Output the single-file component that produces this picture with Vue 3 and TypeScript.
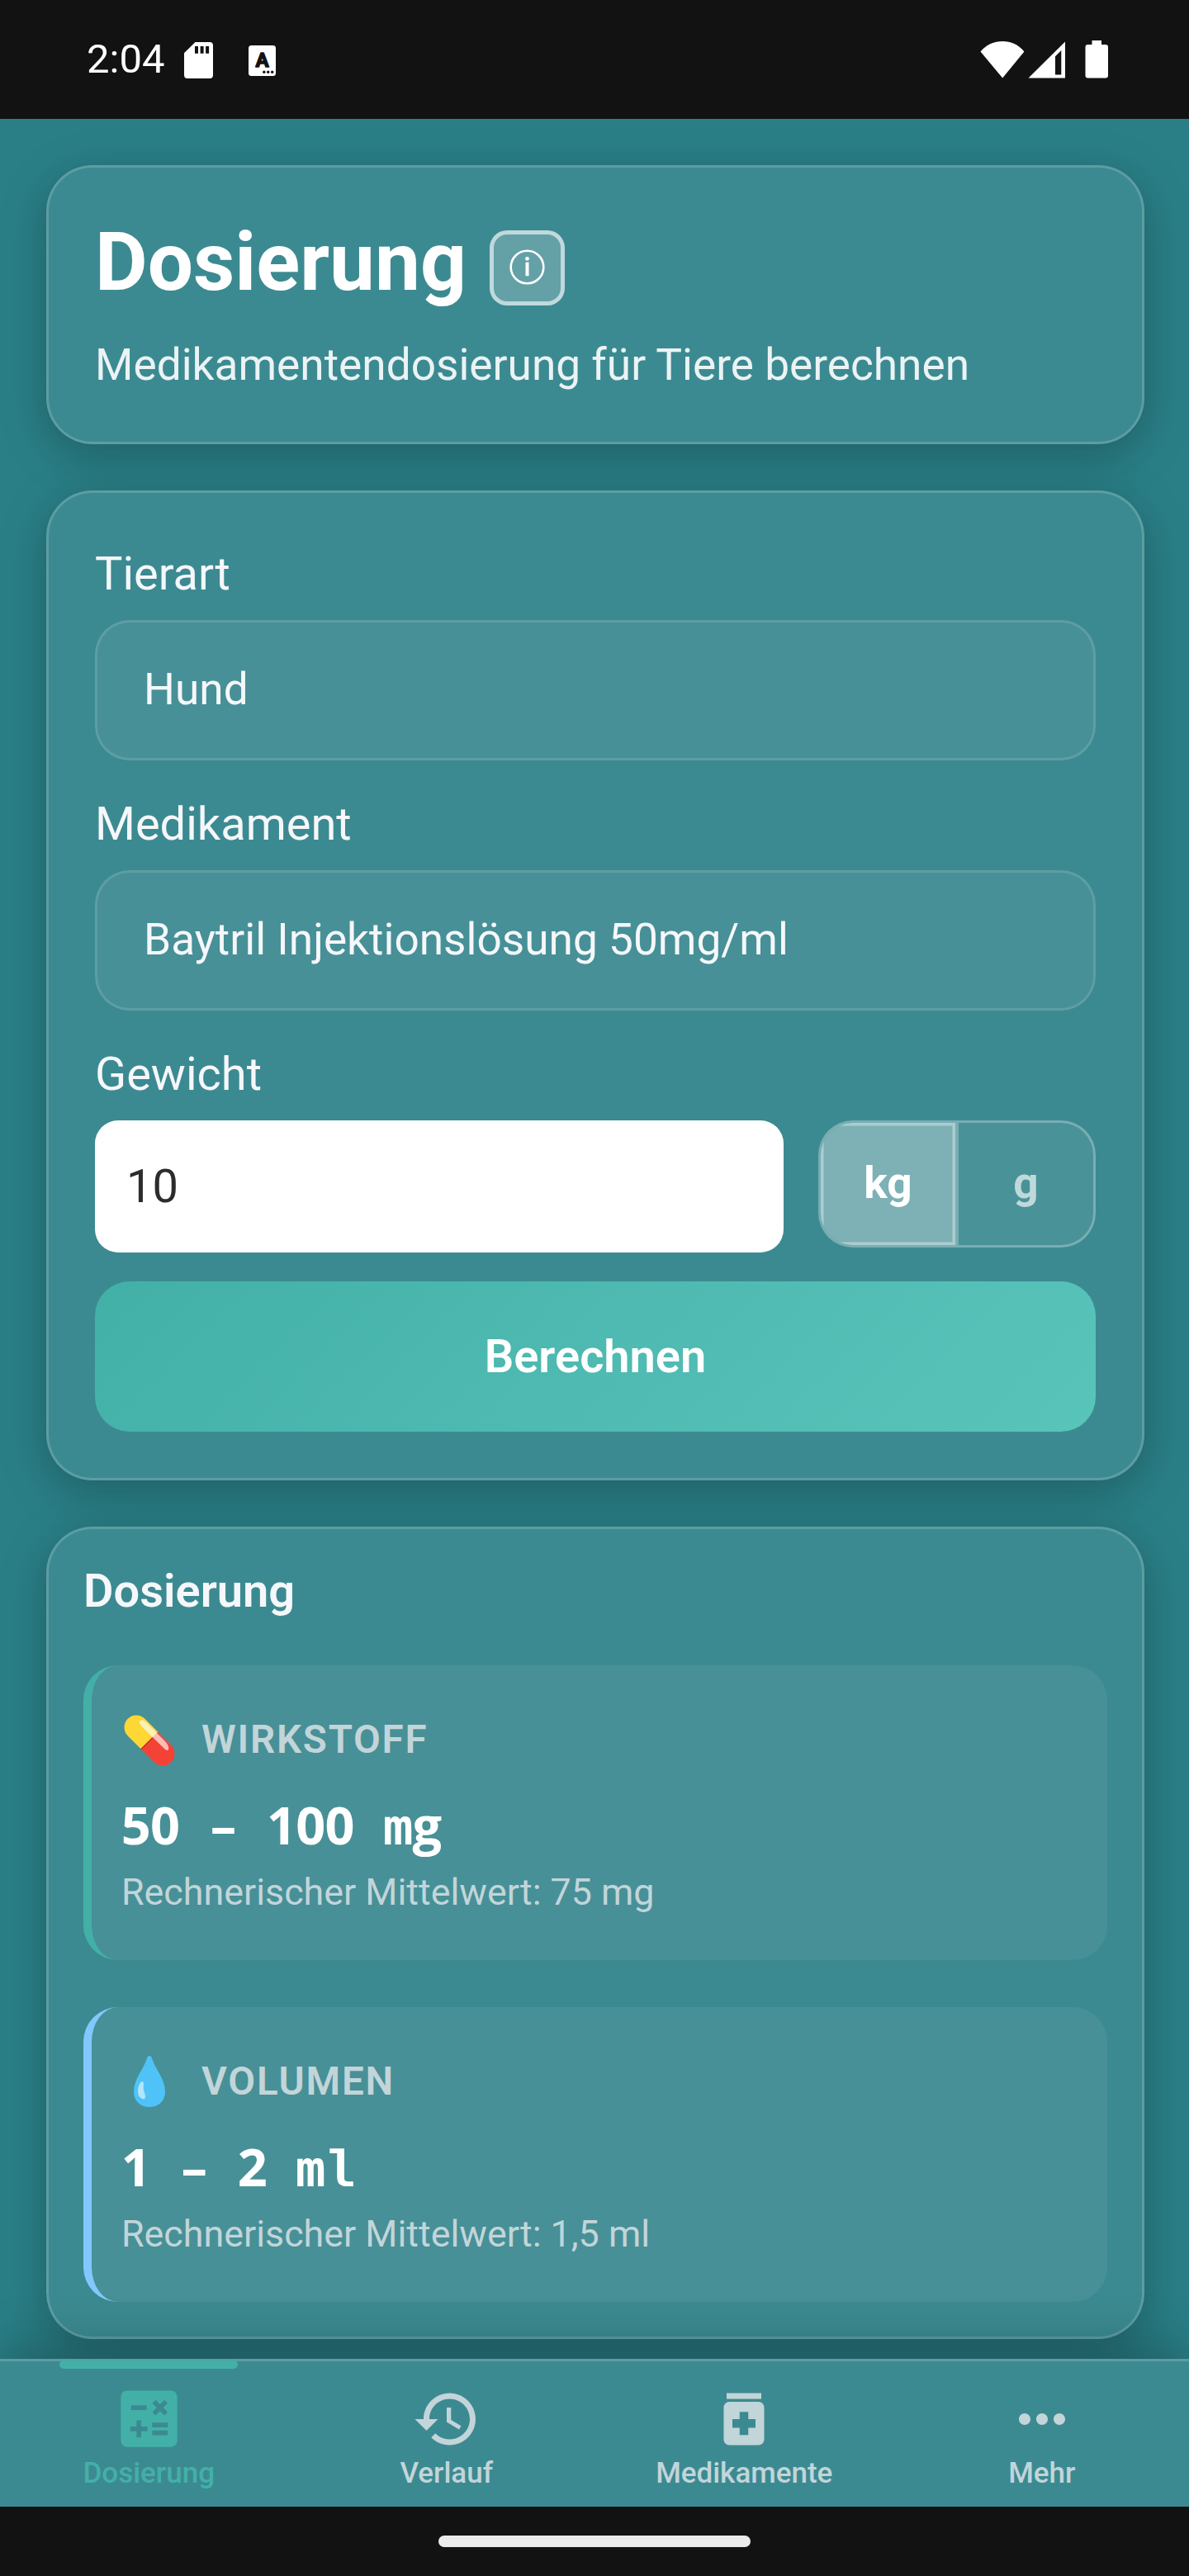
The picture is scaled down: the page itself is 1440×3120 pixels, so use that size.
<script setup lang="ts">
import { ref } from 'vue'

interface Tab {
  id: string
  label: string
  path: string
}

interface Result {
  id: string
  title: string
  value: string
  mean: string
}

const animal = ref('Hund')
const drug = ref('Baytril Injektionslösung 50mg/ml')
const weight = ref('10')
const unit = ref<'kg' | 'g'>('kg')
const units: Array<'kg' | 'g'> = ['kg', 'g']

const results: Result[] = [
  { id: 'agent', title: 'WIRKSTOFF', value: '50 – 100 mg', mean: 'Rechnerischer Mittelwert: 75 mg' },
  { id: 'volume', title: 'VOLUMEN', value: '1 – 2 ml', mean: 'Rechnerischer Mittelwert: 1,5 ml' },
]

const activeTab = ref('dose')
const tabs: Tab[] = [
  {
    id: 'dose',
    label: 'Dosierung',
    path: 'M19 3H5c-1.1 0-2 .9-2 2v14c0 1.1.9 2 2 2h14c1.1 0 2-.9 2-2V5c0-1.1-.9-2-2-2m-5.97 4.06L14.09 6l1.41 1.41L16.91 6l1.06 1.06-1.41 1.41 1.41 1.41-1.06 1.06-1.41-1.4-1.41 1.41-1.06-1.06 1.41-1.41zm-6.78.66h5v1.5h-5zM11.5 16h-2v2H8v-2H6v-1.5h2v-2h1.5v2h2zm6.5 1.25h-5v-1.5h5zm0-2.5h-5v-1.5h5z',
  },
  {
    id: 'history',
    label: 'Verlauf',
    path: 'M13 3c-4.97 0-9 4.03-9 9H1l3.89 3.89.07.14L9 12H6c0-3.87 3.13-7 7-7s7 3.13 7 7-3.13 7-7 7c-1.93 0-3.68-.79-4.94-2.06l-1.42 1.42C8.27 19.99 10.51 21 13 21c4.97 0 9-4.03 9-9s-4.03-9-9-9m-1 5v5l4.28 2.54.72-1.21-3.5-2.08V8z',
  },
  {
    id: 'drugs',
    label: 'Medikamente',
    path: 'M6 3h12v2H6zm11 3H7c-1.1 0-2 .9-2 2v11c0 1.1.9 2 2 2h10c1.1 0 2-.9 2-2V8c0-1.1-.9-2-2-2m-1 9h-2.5v2.5h-3V15H8v-3h2.5V9.5h3V12H16z',
  },
  {
    id: 'more',
    label: 'Mehr',
    path: 'M6 10c-1.1 0-2 .9-2 2s.9 2 2 2 2-.9 2-2-.9-2-2-2m12 0c-1.1 0-2 .9-2 2s.9 2 2 2 2-.9 2-2-.9-2-2-2m-6 0c-1.1 0-2 .9-2 2s.9 2 2 2 2-.9 2-2-.9-2-2-2',
  },
]

// Splits a value into equally wide cells; "m" and "l" take a monospaced face.
const cells = (value: string) =>
  [...value].map((char) => ({ char, kind: char === 'm' ? 'em' : char === 'l' ? 'el' : 'num' }))
</script>

<template>
  <div class="screen">
    <div class="page">
      <header class="status">
        <span class="clock">2:04</span>
        <svg class="sd" width="35" height="44" viewBox="0 0 35 44">
          <path fill="#fff" fill-rule="evenodd" d="M13.5 0H31a4 4 0 0 1 4 4v36a4 4 0 0 1-4 4H4a4 4 0 0 1-4-4V13.3zM13 5v8.700h4V5zm6.600 0v8.700h4V5zm6.500 0v8.700h4V5z" />
        </svg>
        <svg class="lang" width="33" height="37" viewBox="0 0 33 37">
          <rect width="33" height="37" rx="3.500" fill="#fff" />
          <text x="16.500" y="26.300" text-anchor="middle" class="lang-letter">A</text>
          <g fill="#121212">
            <circle cx="18.800" cy="32.300" r="1.700" />
            <circle cx="23.700" cy="32.300" r="1.700" />
            <circle cx="28.700" cy="32.300" r="1.700" />
          </g>
        </svg>
        <svg class="signals" width="156" height="46" viewBox="0 0 156 46">
          <g fill="#fff">
            <path d="M0.500 13.400C7.500 5.200 17 1 27.200 1s19.200 4.200 26.200 12.400L27.200 45.500z" />
            <path fill-rule="evenodd" d="M58.500 45.500 103 1.500v44zM91 19.300V41.500h7.300V12z" />
            <path d="M135.500 0H147v5h5a3 3 0 0 1 3 3v34.500a3 3 0 0 1-3 3h-21.500a3 3 0 0 1-3-3V8a3 3 0 0 1 3-3h5z" />
          </g>
        </svg>
      </header>

      <main class="content">
        <section class="card intro">
          <div class="title-row">
            <h1>Dosierung</h1>
            <button class="info" type="button" aria-label="Information">
              <svg width="43" height="43" viewBox="0 0 43 43">
                <circle cx="21.500" cy="21.500" r="19.800" fill="none" stroke="#fff" stroke-width="2.600" />
                <circle cx="21.500" cy="11.300" r="2.400" fill="#fff" />
                <path d="M21.500 15.700v16.500" stroke="#fff" stroke-width="4" />
              </svg>
            </button>
          </div>
          <p class="subtitle">Medikamentendosierung für Tiere berechnen</p>
        </section>

        <section class="card form">
          <label>Tierart</label>
          <div class="field">{{ animal }}</div>
          <label>Medikament</label>
          <div class="field">{{ drug }}</div>
          <label>Gewicht</label>
          <div class="weight-row">
            <div class="weight">{{ weight }}</div>
            <div class="toggle">
              <button
                v-for="u in units"
                :key="u"
                type="button"
                :class="['unit', { selected: unit === u }]"
                @click="unit = u"
              >{{ u }}</button>
            </div>
          </div>
          <button class="submit" type="button">Berechnen</button>
        </section>

        <section class="card results">
          <h2>Dosierung</h2>
          <article v-for="r in results" :key="r.id" :class="['result', r.id]">
            <div class="result-head">
              <svg v-if="r.id === 'agent'" class="emoji" width="69" height="66" viewBox="0 0 69 66">
                <g transform="translate(34 34) rotate(45)">
                  <path fill="#fdd835" d="M0-14.600h-22.500a14.600 14.600 0 0 0 0 29.200H0z" />
                  <path fill="#f44336" d="M0-14.600h22.500a14.600 14.600 0 0 1 0 29.200H0z" />
                  <path d="M.3-5v19.600" stroke="#c62828" stroke-width="1.200" />
                  <path fill="#fff" fill-opacity=".64" d="M-25-9.200c0-2.600 4-3.600 8-3.600H13c6 0 11 2.400 11 4.800s-3 2.300-7 2.300L-17-5.400c-4.500 0-8-1.200-8-3.800z" />
                </g>
              </svg>
              <svg v-else class="emoji" width="69" height="66" viewBox="0 0 69 66">
                <path fill="#4fc3f7" d="M34 2c1.700 0 2.400 1.200 3 3 4 13 16 25 16 40.500C53 56.500 45 64 34 64s-19-7.500-19-18.500C15 30 27 18 31 5c.6-1.800 1.300-3 3-3z" />
                <path fill="#b3e5fc" d="M25.500 33c2.200.6 1.200 4.500 1.200 8s2.300 7 2.300 10-1.500 3.600-3.500 3c-3.500-1.200-5.500-4.500-5.500-9.500 0-5.500 3-12 5.500-11.500z" />
              </svg>
              <span>{{ r.title }}</span>
            </div>
            <div class="value"><span v-for="(c, i) in cells(r.value)" :key="i" :class="['cell', c.kind]">{{ c.char }}</span></div>
            <div class="mean">{{ r.mean }}</div>
          </article>
        </section>
      </main>

      <nav class="tabs">
        <button
          v-for="t in tabs"
          :key="t.id"
          type="button"
          :class="['tab', { active: activeTab === t.id }]"
          @click="activeTab = t.id"
        >
          <span class="tab-icon"><svg viewBox="0 0 24 24"><path fill="currentColor" :d="t.path" /></svg></span>
          <span class="tab-label">{{ t.label }}</span>
        </button>
      </nav>
      <footer class="system"><div class="home"></div></footer>
    </div>
  </div>
</template>

<style>
body {
  margin: 0;
  background: #121212;
}
</style>

<style scoped>
.screen {
  width: 1440px;
  height: 3120px;
  overflow: hidden;
  font-family: Roboto, "Liberation Sans", sans-serif;
  color: #f5f7fa;
}
.page {
  display: flex;
  flex-direction: column;
  width: 1442px;
  height: 3120px;
  background: #2a7f87;
}
button {
  margin: 0;
  padding: 0;
  border: 0;
  background: none;
  font-family: inherit;
}
.status {
  display: flex;
  align-items: flex-start;
  box-sizing: border-box;
  flex: none;
  height: 144px;
  padding: 0 99px 0 105px;
  background: #121212;
}
.clock {
  width: 118px;
  margin-top: 43px;
  font-size: 49px;
  line-height: 58px;
  color: #fff;
}
.sd {
  margin-top: 51px;
}
.lang {
  margin: 55px 0 0 43px;
}
.lang-letter {
  font: 700 24px Roboto, sans-serif;
  fill: #121212;
  stroke: #121212;
  stroke-width: 1.4;
  stroke-linejoin: round;
}
.signals {
  margin: 49px 0 0 auto;
}
.content {
  display: flex;
  flex: none;
  flex-direction: column;
  gap: 56px;
  box-sizing: border-box;
  height: 2713px;
  padding: 56px 56px 0;
}
.card {
  display: flex;
  flex: none;
  flex-direction: column;
  box-sizing: border-box;
  padding: 56px;
  border: 3px solid rgba(255, 255, 255, 0.17);
  border-radius: 56px;
  background: #3c8a91;
  box-shadow: 0 14px 56px rgba(0, 0, 0, 0.25);
}
.intro {
  height: 338px;
}
.title-row {
  display: flex;
  align-items: flex-start;
  gap: 28px;
  height: 118px;
}
h1 {
  margin: 0;
  font-size: 98px;
  line-height: 118px;
  font-weight: 700;
  color: #fff;
}
.info {
  display: flex;
  align-items: center;
  justify-content: center;
  box-sizing: border-box;
  width: 91px;
  height: 91px;
  margin-top: 20px;
  padding-bottom: 3px;
  border: 5px solid rgba(255, 255, 255, 0.6);
  border-radius: 21px;
  background: rgba(255, 255, 255, 0.2);
}
.subtitle {
  margin: 28px 0 0;
  font-size: 53.2px;
  line-height: 74px;
  color: #ebf3f4;
}
.form {
  height: 1199px;
}
label {
  display: block;
  height: 84px;
  margin-bottom: 14px;
  font-size: 56px;
  line-height: 84px;
}
.field {
  display: flex;
  align-items: center;
  box-sizing: border-box;
  height: 170px;
  margin-bottom: 35px;
  padding: 0 56px 2px;
  border: 3px solid rgba(255, 255, 255, 0.12);
  border-radius: 42px;
  background: rgba(255, 255, 255, 0.06);
  font-size: 53.2px;
}
.weight-row {
  display: flex;
  align-items: flex-start;
  justify-content: space-between;
  height: 160px;
}
.weight {
  display: flex;
  align-items: center;
  box-sizing: border-box;
  width: 834px;
  height: 160px;
  padding: 0 38px;
  border-radius: 28px;
  background: #fff;
  font-size: 56px;
  color: #2c2c2c;
}
.toggle {
  display: flex;
  box-sizing: border-box;
  width: 336px;
  height: 154px;
  overflow: hidden;
  border: 3px solid rgba(255, 255, 255, 0.26);
  border-radius: 42px;
  background: rgba(255, 255, 255, 0.07);
}
.unit {
  flex: 1;
  padding-bottom: 3px;
  font-size: 53.2px;
  font-weight: 700;
  color: rgba(255, 255, 255, 0.65);
}
.unit + .unit {
  border-left: 4px solid rgba(255, 255, 255, 0.26);
}
.unit.selected {
  background: rgba(255, 255, 255, 0.29);
  box-shadow: inset 0 0 0 3.5px rgba(255, 255, 255, 0.36);
  color: #fff;
}
.submit {
  height: 182px;
  margin-top: 35px;
  border-radius: 42px;
  background: linear-gradient(135deg, #43b0a8 0%, #59c4ba 100%);
  font-size: 56px;
  font-weight: 600;
  color: #fff;
}
.results {
  height: 984px;
  padding: 42px;
}
h2 {
  margin: 0 0 57px;
  font-size: 56px;
  line-height: 66px;
  font-weight: 600;
}
.result {
  box-sizing: border-box;
  height: 357px;
  padding: 42px 35px 0 36px;
  border-left: 10px solid #43b0a8;
  border-radius: 42px;
  background: rgba(255, 255, 255, 0.06);
}
.result + .result {
  margin-top: 57px;
}
.result.volume {
  border-left-color: #82c8ff;
}
.result-head {
  display: flex;
  align-items: center;
  gap: 28px;
  height: 96px;
  font-size: 47.6px;
  font-weight: 600;
  letter-spacing: 1.75px;
  color: #c2d5d9;
}
.value {
  display: flex;
  align-items: baseline;
  height: 74px;
  margin-top: 18px;
  color: #fff;
  font-family: "Open Sans", sans-serif;
  font-size: 63px;
  line-height: 74px;
  font-weight: 670;
  white-space: pre;
}
.cell {
  display: flex;
  flex: none;
  justify-content: center;
  width: 35.28px;
}
.cell.em {
  font-family: "DejaVu Sans Mono", monospace;
  font-size: 61px;
  font-weight: 700;
  line-height: 1px;
}
.cell.el {
  font-family: "Liberation Mono", monospace;
  font-size: 63px;
  font-weight: 700;
  line-height: 1px;
}
.mean {
  margin-top: 14px;
  font-size: 44.8px;
  line-height: 62px;
  color: #c2d5d9;
}
.tabs {
  position: relative;
  display: flex;
  flex: none;
  box-sizing: border-box;
  height: 179px;
  border-top: 3px solid #5b9da3;
  background: #3c8a91;
  box-shadow: 0 -14px 56px rgba(0, 0, 0, 0.25);
}
.tab {
  position: relative;
  display: flex;
  flex: 1;
  flex-direction: column;
  align-items: center;
  padding-top: 24px;
  color: #c2d5d9;
}
.tab.active {
  color: #43b0a8;
}
.tab.active::before {
  content: "";
  position: absolute;
  top: -1px;
  left: 20%;
  width: 60%;
  height: 10px;
  border-radius: 5px;
  background: #43b0a8;
}
.tab-icon {
  display: flex;
  align-items: center;
  justify-content: center;
  height: 91px;
}
.tab-icon svg {
  width: 84px;
  height: 84px;
}
.tab.active .tab-icon svg {
  width: 91px;
  height: 91px;
}
.tab-label {
  font-size: 35px;
  line-height: 42px;
  font-weight: 500;
}
.system {
  display: flex;
  position: relative;
  flex: none;
  justify-content: center;
  height: 84px;
  background: #121212;
}
.home {
  width: 378px;
  height: 14px;
  margin: 35px 2px 0 0;
  border-radius: 7px;
  background: #ebebeb;
}
</style>
